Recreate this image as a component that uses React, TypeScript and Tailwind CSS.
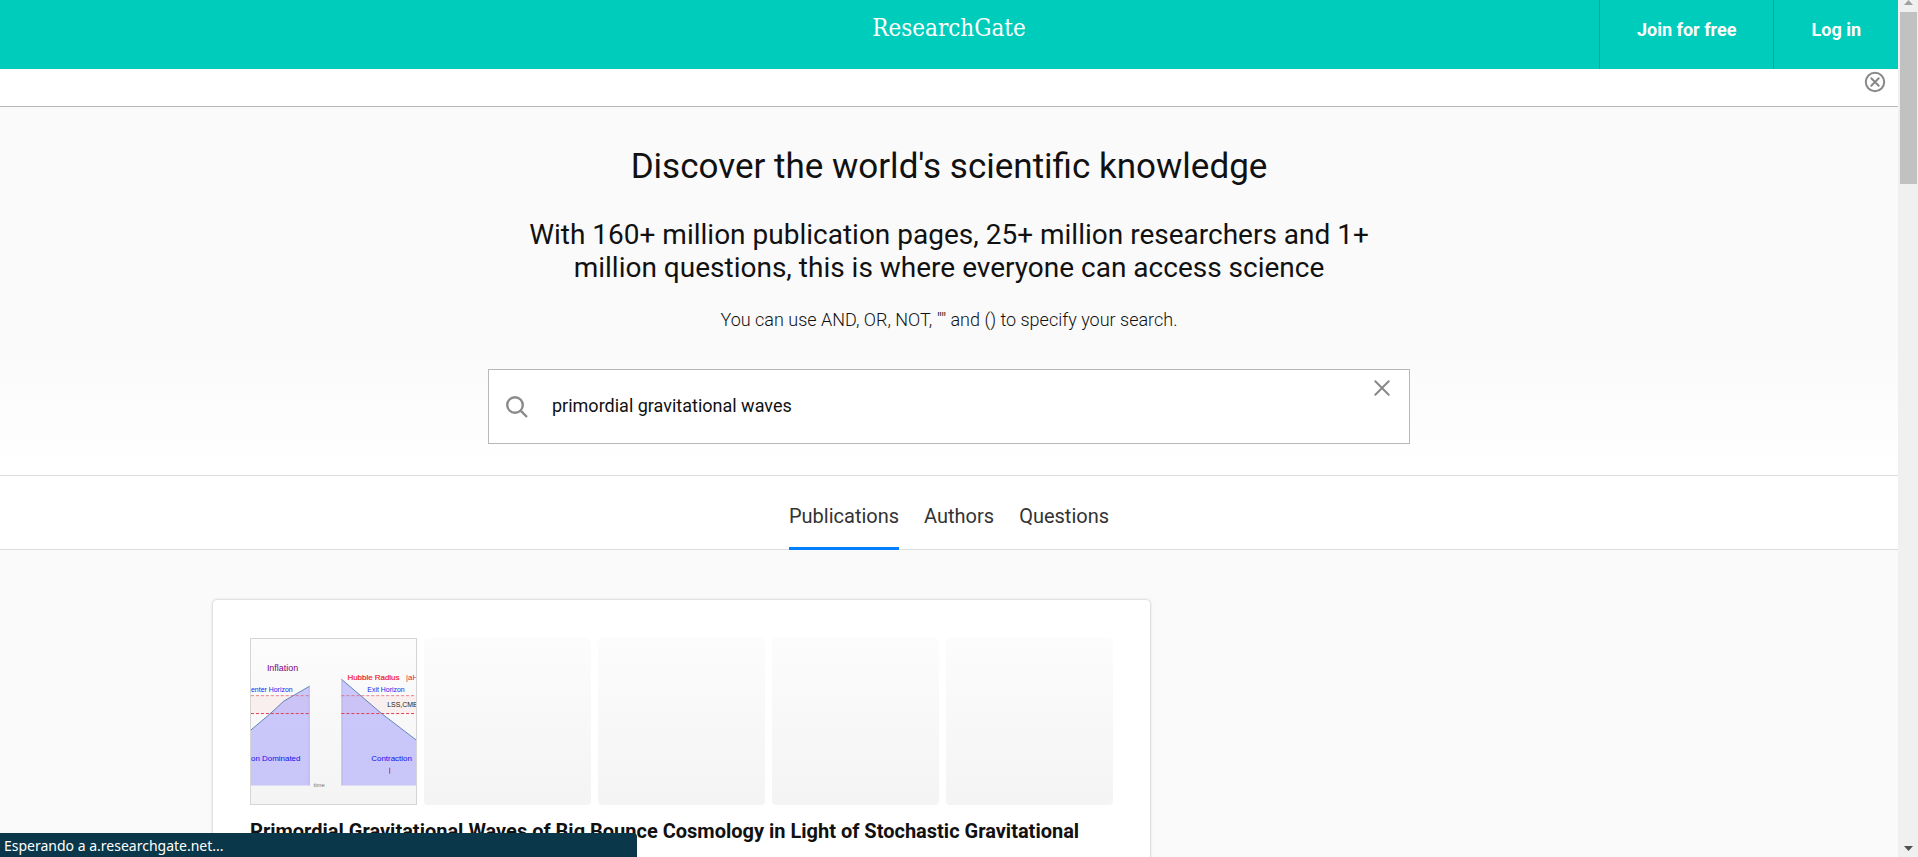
import { useState } from "react";

const tabs = ["Publications", "Authors", "Questions"];

function Header() {
  return (
    <header className="grid h-[69px] grid-cols-[1fr_auto_1fr] bg-[#00ccbb] text-white">
      <div />
      <a href="#home" className="pt-3 font-['DejaVu_Serif_Condensed','DejaVu_Serif',serif] text-2xl leading-8">
        ResearchGate
      </a>
      <nav className="flex justify-end text-lg leading-6 font-bold">
        <a href="#join" className="border-l border-[#00a99d] px-[37px] pt-[18px]">
          Join for free
        </a>
        <a href="#login" className="border-l border-[#00a99d] px-[37px] pt-[18px]">
          Log in
        </a>
      </nav>
    </header>
  );
}

function Banner() {
  return (
    <div className="flex h-[38px] justify-end border-b border-[#b8b8b8] bg-white px-[11px] pt-[2px]">
      <button type="button" aria-label="Close banner" className="size-6 text-[#888]">
        <svg viewBox="0 0 24 24" className="size-full" fill="none" stroke="currentColor" strokeWidth="2" strokeLinecap="round">
          <circle cx="12" cy="11" r="9.2" />
          <path d="M8.3 7.3l7.4 7.4M15.7 7.3l-7.4 7.4" />
        </svg>
      </button>
    </div>
  );
}

function Search() {
  const [query, setQuery] = useState("primordial gravitational waves");
  return (
    <form
      className="mx-auto flex h-[75px] w-full max-w-[922px] border border-[#b8b8b8] bg-white"
      onSubmit={(e) => e.preventDefault()}
    >
      <label htmlFor="search" aria-label="Search" className="flex w-[63px] shrink-0 items-center pl-[17px]">
        <svg viewBox="0 0 22 22" className="size-[22px]" fill="none" stroke="#8a8a8a" strokeWidth="2.4">
          <circle cx="9" cy="9" r="7.8" />
          <path d="M14.6 14.6L21 21" />
        </svg>
      </label>
      <input
        id="search"
        type="text"
        value={query}
        onChange={(e) => setQuery(e.target.value)}
        className="min-w-0 flex-1 bg-transparent pb-[2px] text-lg leading-6 text-[#111] outline-none"
      />
      <button
        type="button"
        aria-label="Clear search"
        onClick={() => setQuery("")}
        className="mt-2 mr-4 size-[22px] text-[#888]"
      >
        <svg viewBox="0 0 22 22" className="size-full" fill="none" stroke="currentColor" strokeWidth="2" strokeLinecap="round">
          <path d="M4.3 3.3l13.4 13.4M17.7 3.3L4.3 16.7" />
        </svg>
      </button>
    </form>
  );
}

function Hero() {
  return (
    <section className="border-b border-[#ddd] bg-linear-to-b from-[#fafafa] from-65% to-white px-6 pt-[37px] pb-[31px] text-center text-[#111]">
      <h1 className="text-[35px] leading-[46px]">Discover the world&apos;s scientific knowledge</h1>
      <p className="mx-auto mt-7 max-w-[920px] text-[28px] leading-[33px]">
        With 160+ million publication pages, 25+ million researchers and 1+
        <br />
        million questions, this is where everyone can access science
      </p>
      <p className="mt-6 mb-[37px] text-lg leading-6 font-light text-[#111]">
        You can use AND, OR, NOT, &quot;&quot; and () to specify your search.
      </p>
      <Search />
    </section>
  );
}

function Tabs() {
  const [active, setActive] = useState(tabs[0]);
  return (
    <div className="border-b border-[#ddd] bg-white">
      <div role="tablist" className="-mb-px flex justify-center gap-[25px] text-xl leading-6 text-[#333]">
        {tabs.map((tab) => (
          <button
            key={tab}
            type="button"
            role="tab"
            aria-selected={tab === active}
            onClick={() => setActive(tab)}
            className={`border-b-3 pt-7 pb-[19px] ${tab === active ? "border-[#0080ff]" : "border-transparent"}`}
          >
            {tab}
          </button>
        ))}
      </div>
    </div>
  );
}

function Figure() {
  return (
    <svg viewBox="0 0 166 165" className="block size-full" fontFamily="Liberation Sans, Arial, sans-serif">
      <rect x="0" y="56" width="59" height="19" fill="#faefef" />
      <rect x="91" y="56" width="75" height="19" fill="#faefef" />
      <path d="M0 91L19 75L33 62L59 47V147H0Z" fill="#8a84ff" fillOpacity=".42" />
      <path d="M91 40L132 75L166 101V147H91Z" fill="#8a84ff" fillOpacity=".42" />
      <g fill="none" stroke="#5e84b8">
        <path d="M0 91L19 75L33 62L59 47M91 40L132 75L166 101" />
        <path d="M58.500 47V147M91.500 40V147" stroke="#aaa8d8" strokeWidth=".6" />
      </g>
      <g stroke="#e06070" strokeDasharray="3 2">
        <path d="M0 56.500H59M91 56.500H166" opacity=".75" />
        <path d="M0 74.500H59M91 74.500H166" stroke="#e04050" />
      </g>
      <text x="16" y="32" fontSize="9" fill="#800080">Inflation</text>
      <text x="0" y="53" fontSize="7" fill="#2222ee">enter Horizon</text>
      <text x="97" y="41" fontSize="8" fill="#f02030" stroke="#f02030" strokeWidth=".2">Hubble Radius</text>
      <text x="156" y="41" fontSize="8" fill="#f02030">|aH</text>
      <text x="117" y="53" fontSize="7" fill="#2222ee">Exit Horizon</text>
      <text x="137" y="68" fontSize="7" fill="#222">LSS,CMB</text>
      <text x="0" y="122" fontSize="8" fill="#1111ee">on Dominated</text>
      <text x="121" y="122" fontSize="8" fill="#1111ee">Contraction</text>
      <path d="M139.500 129V135" stroke="#e03050" />
      <text x="63" y="148" fontSize="6" fill="#777">time</text>
    </svg>
  );
}

function Result() {
  return (
    <article className="w-full max-w-[937px] rounded-sm bg-white px-[37px] pt-[38px] pb-10 shadow-[0_0_3px_rgba(0,0,0,0.28)]">
      <div className="grid grid-cols-5 gap-[7px]">
        <a
          href="#figure"
          aria-label="Figure preview"
          className="aspect-square overflow-hidden border border-[#d5d5d5] bg-linear-to-b from-[#fcfcfc] to-[#f4f4f4]"
        >
          <Figure />
        </a>
        {[1, 2, 3, 4].map((n) => (
          <div key={n} className="rounded-sm bg-linear-to-b from-[#fcfcfc] to-[#f4f4f4]" />
        ))}
      </div>
      <h2 className="mt-3 text-xl leading-7 font-bold text-[#111]">
        <a href="#publication">Primordial Gravitational Waves of Big Bounce Cosmology in Light of Stochastic Gravitational</a>
      </h2>
    </article>
  );
}

function ScrollBar() {
  return (
    <div aria-hidden="true" className="flex w-5 shrink-0 flex-col items-center bg-[#f0f0f0]">
      <svg viewBox="0 0 9 5" className="h-[5px] w-[9px]">
        <path d="M0 5L4.500 0L9 5Z" fill="#a0a0a0" />
      </svg>
      <div className="mt-[7px] ml-px h-[172px] w-[17px] bg-[#c1c1c1]" />
      <svg viewBox="0 0 9 5" className="mt-auto mb-[6px] h-[5px] w-[9px]">
        <path d="M0 0H9L4.500 5Z" fill="#505050" />
      </svg>
    </div>
  );
}

export default function App() {
  return (
    <div className="relative flex h-screen overflow-hidden bg-[#fafafa] font-[Roboto,sans-serif]">
      <div className="min-w-0 flex-1">
        <Header />
        <Banner />
        <main>
          <Hero />
          <Tabs />
          <div className="mx-auto max-w-[1472px] pt-[50px]">
            <Result />
          </div>
        </main>
      </div>
      <ScrollBar />
      <div role="status" className="absolute bottom-0 left-0 h-6 w-[637px] rounded-tr-sm bg-[#0a3749] pl-1 font-['Noto_Sans',sans-serif] text-sm leading-[26px] text-white">
        Esperando a a.researchgate.net...
      </div>
    </div>
  );
}
